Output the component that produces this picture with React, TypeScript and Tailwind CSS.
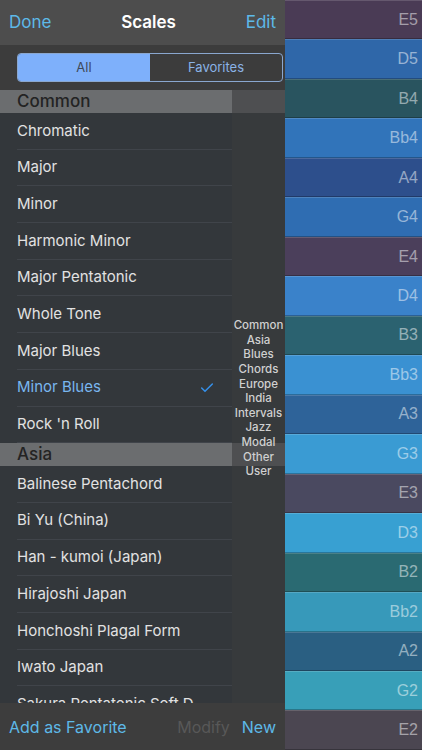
import { Check } from 'lucide-react';

const COMMON = [
  'Chromatic',
  'Major',
  'Minor',
  'Harmonic Minor',
  'Major Pentatonic',
  'Whole Tone',
  'Major Blues',
  'Minor Blues',
  "Rock 'n Roll",
];

const ASIA = [
  'Balinese Pentachord',
  'Bi Yu (China)',
  'Han - kumoi (Japan)',
  'Hirajoshi Japan',
  'Honchoshi Plagal Form',
  'Iwato Japan',
  'Sakura Pentatonic Soft D',
];

const INDEX = ['Common', 'Asia', 'Blues', 'Chords', 'Europe', 'India', 'Intervals', 'Jazz', 'Modal', 'Other', 'User'];

const NOTES = [
  { name: 'E5', bg: 'bg-[#4a3b55]' },
  { name: 'D5', bg: 'bg-[#2f67a9]' },
  { name: 'B4', bg: 'bg-[#29545f]' },
  { name: 'Bb4', bg: 'bg-[#3174ba]' },
  { name: 'A4', bg: 'bg-[#2d4f8c]' },
  { name: 'G4', bg: 'bg-[#2f6db2]' },
  { name: 'E4', bg: 'bg-[#4b3f5b]' },
  { name: 'D4', bg: 'bg-[#3a82ca]' },
  { name: 'B3', bg: 'bg-[#2b6270]' },
  { name: 'Bb3', bg: 'bg-[#3a91d2]' },
  { name: 'A3', bg: 'bg-[#2e6399]' },
  { name: 'G3', bg: 'bg-[#3a9bd3]' },
  { name: 'E3', bg: 'bg-[#4a4960]' },
  { name: 'D3', bg: 'bg-[#38a0d2]' },
  { name: 'B2', bg: 'bg-[#2a6a72]' },
  { name: 'Bb2', bg: 'bg-[#3799ba]' },
  { name: 'A2', bg: 'bg-[#2a5f82]' },
  { name: 'G2', bg: 'bg-[#389fb8]' },
  { name: 'E2', bg: 'bg-[#4b4651]' },
];

function SectionHeader({ title }: { title: string }) {
  return (
    <div className="h-[23px] flex items-center pl-[17px] bg-[#6b6d6f] text-[17px] font-medium text-[#232323] leading-none">
      {title}
    </div>
  );
}

function Row({ label, selected }: { label: string; selected?: boolean }) {
  return (
    <div className="h-[36.7px] flex items-center pl-[17px]">
      <div className="flex-1 h-full flex items-center border-b border-[#40444a] mr-[53px] pr-[17px]">
        <span className={`flex-1 text-[15px] ${selected ? 'text-[#79b6ef]' : 'text-[#e2e2e2]'}`}>{label}</span>
        {selected && <Check size={16} strokeWidth={2.25} className="text-[#3590ea]" />}
      </div>
    </div>
  );
}

export default function App() {
  return (
    <div
      className="w-[422px] h-[750px] flex overflow-hidden bg-[#33373b]"
      style={{ fontFamily: 'Inter, "Noto Sans", sans-serif' }}
    >
      <div className="w-[285px] flex flex-col">
        <div className="h-[45px] flex items-center justify-between px-[9px] bg-[#4d4d4d]">
          <span className="text-[17px] text-[#5db9e8]">Done</span>
          <span className="text-[17px] font-semibold text-white">Scales</span>
          <span className="text-[17px] text-[#5db9e8]">Edit</span>
        </div>

        <div className="h-[45px] flex items-center pl-[17px] pr-[2px] bg-[#3c3c3c]">
          <div className="flex-1 h-[29px] flex rounded-[4px] border border-[#8aa7cf] overflow-hidden text-[13px]">
            <div className="flex-1 flex items-center justify-center bg-[#7eb0fb] text-[#3e4a58]">All</div>
            <div className="flex-1 flex items-center justify-center text-[#8ab3e6]">Favorites</div>
          </div>
        </div>

        <div className="flex-1 relative overflow-hidden bg-[#33373b]">
          <SectionHeader title="Common" />
          {COMMON.map((s) => (
            <Row key={s} label={s} selected={s === 'Minor Blues'} />
          ))}
          <SectionHeader title="Asia" />
          {ASIA.map((s) => (
            <Row key={s} label={s} />
          ))}

          <div className="absolute right-0 top-0 bottom-0 w-[53px] bg-[#3a3c3e]/60 flex flex-col items-center justify-center">
            <div className="flex flex-col items-center mt-[4px]">
              {INDEX.map((s) => (
                <span key={s} className="h-[14.6px] leading-[14.6px] text-[11.5px] font-medium text-[#d0d0d0]">
                  {s}
                </span>
              ))}
            </div>
          </div>
        </div>

        <div className="h-[47px] flex items-center px-[9px] bg-[#3d3d3d]">
          <span className="flex-1 text-[16px] text-[#5db9e8]">Add as Favorite</span>
          <span className="text-[16px] text-[#585858] mr-[12px]">Modify</span>
          <span className="text-[16px] text-[#5db9e8]">New</span>
        </div>
      </div>

      <div className="flex-1 flex flex-col">
        {NOTES.map((n) => (
          <div
            key={n.name}
            className={`flex-1 flex items-center justify-end pr-[4px] border-t border-t-white/15 border-b border-b-black/25 ${n.bg}`}
          >
            <span
              className="text-[16px] text-white/50"
              style={{ fontFamily: '"Liberation Sans", Arial, sans-serif' }}
            >
              {n.name}
            </span>
          </div>
        ))}
      </div>
    </div>
  );
}
